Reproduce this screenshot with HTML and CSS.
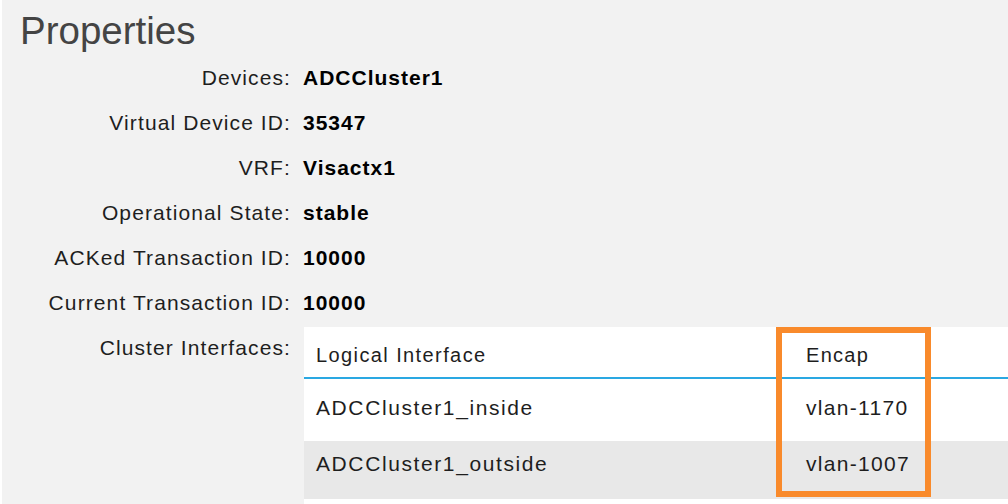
FILE: index.html
```html
<!DOCTYPE html>
<html>
<head>
<meta charset="utf-8">
<link rel="stylesheet" href="styles.css">
</head>
<body>
<div class="page">
  <h1 class="title">Properties</h1>
  <div class="props">
    <div class="label">Devices:</div><div class="value">ADCCluster1</div>
    <div class="label">Virtual Device ID:</div><div class="value">35347</div>
    <div class="label">VRF:</div><div class="value">Visactx1</div>
    <div class="label">Operational State:</div><div class="value">stable</div>
    <div class="label">ACKed Transaction ID:</div><div class="value">10000</div>
    <div class="label">Current Transaction ID:</div><div class="value">10000</div>
    <div class="label">Cluster Interfaces:</div>
    <div class="table-wrap">
      <div class="table">
        <div class="tr head"><div class="td c1">Logical Interface</div><div class="td c2">Encap</div></div>
        <div class="tr r1"><div class="td c1">ADCCluster1_inside</div><div class="td c2">vlan-1170</div></div>
        <div class="tr r2"><div class="td c1">ADCCluster1_outside</div><div class="td c2">vlan-1007</div></div>
        <div class="tr r3"></div>
      </div>
      <div class="highlight"></div>
    </div>
  </div>
</div>
</body>
</html>
```
FILE: styles.css
```css
html, body {
  margin: 0;
  padding: 0;
  background: #ffffff;
}
body {
  width: 1008px;
  height: 504px;
  overflow: hidden;
  font-family: "Liberation Sans", Arial, sans-serif;
}
.page {
  margin-left: 2px;
  height: 504px;
  background: #f2f2f2;
  overflow: hidden;
}
.title {
  margin: 0;
  padding: 7px 0 0 18px;
  font-size: 38.5px;
  line-height: 48px;
  font-weight: normal;
  color: #444444;
}
.props {
  display: grid;
  grid-template-columns: 289px 1fr;
  column-gap: 12px;
  grid-auto-rows: 45px;
  font-size: 21px;
  line-height: 45px;
}
.label {
  text-align: right;
  color: #1e1e1e;
  letter-spacing: 1.1px;
}
.value {
  font-weight: bold;
  color: #000;
  letter-spacing: 1px;
}
.table-wrap {
  position: relative;
  margin-top: 2px;
  margin-left: 1px;
}
.table {
  display: flex;
  flex-direction: column;
  background: #ffffff;
  color: #1e1e1e;
  letter-spacing: 1.6px;
}
.tr {
  display: flex;
}
.td {
  padding-left: 12px;
  box-sizing: border-box;
}
.c1 {
  width: 490px;
}
.c2 {
  flex: 1;
  letter-spacing: 1.3px;
}
.head {
  height: 52px;
  line-height: 52px;
  border-bottom: 2px solid #2aa8e2;
  box-sizing: border-box;
  font-size: 20px;
  letter-spacing: 1.4px;
}
.head .td {
  padding-top: 2px;
}
.r1 {
  height: 62px;
  line-height: 58px;
}
.r2 {
  height: 58px;
  line-height: 46px;
  background: #e8e8e8;
}
.r3 {
  height: 10px;
}
.highlight {
  position: absolute;
  left: 472px;
  top: 0;
  width: 155px;
  height: 170px;
  border: 6px solid #f98a2b;
  box-sizing: border-box;
}
```
